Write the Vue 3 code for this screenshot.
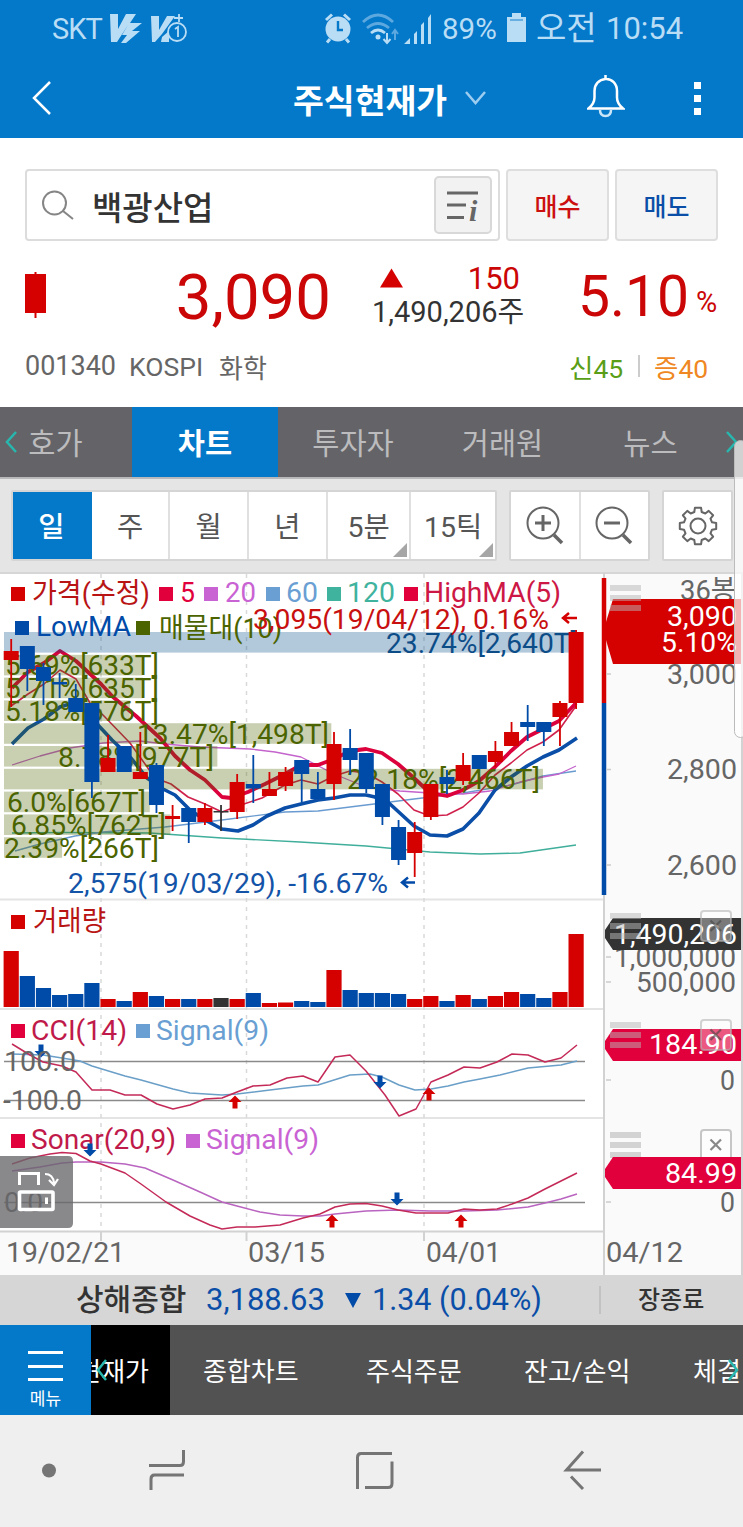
<template>
  <div class="app">
    <header class="head">
      <div class="status">
        <span class="carrier">SKT</span>
        <svg class="apps" width="78" height="32" viewBox="0 0 78 32" fill="#b9ddf5">
          <path d="M0 2h8v15L16 2h10l-6 9h12L22 19h8L16 31h-5l6-8h-5l6-10L7 30H1z" />
          <path d="M41 4h8v14l8-14h8L52 22l-7 8h-3z" />
          <path d="M52 25l7-6v11h-8z" />
          <circle cx="67" cy="20" r="9" fill="#0478c9" stroke="#b9ddf5" stroke-width="1.8" />
          <path d="M65 17l3-2v10M64 6h9M69 2v8" fill="none" stroke="#b9ddf5" stroke-width="1.8" />
        </svg>
        <svg class="signals" width="110" height="34" viewBox="0 0 110 34" fill="none" stroke="#b9ddf5">
          <circle cx="14" cy="18" r="12.500" fill="#b9ddf5" stroke="none" />
          <path d="M2 9l6-5.500M26 9l-6-5.500M6 28l-3 3.500M22 28l3 3.500" stroke-width="3" />
          <path d="M14 10v9h5" stroke="#0478c9" stroke-width="2.4" />
          <path d="M39 11q15-14 30 0M43 17q11-9 22 0" stroke="#5da9df" stroke-width="2.8" />
          <path d="M47 22q7-6 14 0" stroke-width="2.8" />
          <circle cx="54" cy="26" r="2.5" fill="#b9ddf5" stroke="none" />
          <path d="M63 22v9m-3.500-3l3.500 4 3.500-4" stroke-width="2" />
          <path d="M71 29v-9m-3 3l3-4 3 4" stroke="#5da9df" stroke-width="2" />
          <path d="M80 33l6-6v6zM90 33v-10l3-3v13zM97 33V14l3-3v22zM104 33V7l3-4v30z" fill="#b9ddf5" stroke="none" />
        </svg>
        <span class="battery_text">89%</span>
        <svg class="battery" width="19" height="29" viewBox="0 0 19 29">
          <path d="M0 4h5V0h9v4h5v25H0z" fill="#b9ddf5" />
          <path d="M3 7h13" stroke="#4c9fd9" stroke-width="1.500" />
        </svg>
        <span class="ampm">오전</span>
        <span class="clock">10:54</span>
      </div>
      <div class="title_row">
        <svg class="back" width="20" height="34" viewBox="0 0 20 34"><path d="M18 1L2 17l16 16" /></svg>
        <h1>주식현재가</h1>
        <svg class="down" width="21" height="14" viewBox="0 0 21 14"><path d="M1 1l9.500 11L20 1" /></svg>
        <svg class="bell" width="38" height="44" viewBox="0 0 38 44">
          <path d="M1.500 34.500q6-5 6-11V17C7.500 10 12 5.500 18.500 5S30 10 30 17v6.500q0 6 6 11zM18.500 1v4" />
          <path d="M13 36q0 6 5.500 6t5.500-6" stroke="#c9e5f8" />
        </svg>
        <div class="dots"><i></i><i></i><i></i></div>
      </div>
    </header>

    <section class="quote">
      <div class="search_row">
        <div class="search">
          <svg width="34" height="32" viewBox="0 0 34 32" fill="none" stroke="#858585" stroke-width="2">
            <circle cx="12.500" cy="14" r="11.500" />
            <path d="M21 22l10 8" />
          </svg>
          <span class="stock">백광산업</span>
          <div class="list_btn">
            <svg width="34" height="34" viewBox="0 0 34 34" stroke="#666" stroke-width="3" fill="none">
              <path d="M2 5h31M2 17h19M2 29.500h17" />
            </svg>
            <em>i</em>
          </div>
        </div>
        <button class="trade buy">매수</button>
        <button class="trade sell">매도</button>
      </div>
      <div class="price_row">
        <svg class="candle" width="21" height="46" viewBox="0 0 21 46" fill="#d50000">
          <path d="M0 2h21v39H0zM9.500 0h2v46h-2z" />
        </svg>
        <strong class="price">3,090</strong>
        <div class="change">
          <div class="diff">
            <svg width="23" height="20" viewBox="0 0 24 20"><path d="M12 0l12 20H0z" fill="#d50000" /></svg>
            <span>150</span>
          </div>
          <div class="volume">1,490,206주</div>
        </div>
        <strong class="rate">5.10</strong>
        <span class="pct">%</span>
      </div>
      <div class="info_row">
        <span class="code">001340</span>
        <span class="market">KOSPI</span>
        <span class="sector">화학</span>
        <span class="credit">신45</span>
        <i></i>
        <span class="margin">증40</span>
      </div>
    </section>

    <nav class="tabs">
      <svg class="arrow" width="12" height="22" viewBox="0 0 12 22"><path d="M11 1L2 11l9 10" /></svg>
      <div
        v-for="tab in tabs"
        :key="tab.name"
        class="tab"
        :class="[tab.cls, { active: tab.name === current_tab }]"
        @click="current_tab = tab.name"
      >
        {{ tab.name }}
      </div>
      <svg class="arrow next" width="12" height="22" viewBox="0 0 12 22"><path d="M1 1l9 10-9 10" /></svg>
    </nav>

    <div class="tools">
      <div class="periods">
        <div
          v-for="p in periods"
          :key="p"
          class="period"
          :class="{ active: p === period, more: p.length > 1 }"
          @click="period = p"
        >
          {{ p }}
        </div>
      </div>
      <div class="zoom">
        <div class="tool">
          <svg width="40" height="42" viewBox="0 0 40 42">
            <circle cx="18" cy="18" r="15.500" />
            <path d="M29 30l8 8" stroke-width="3.500" />
            <path d="M10 18h16M18 10v16" stroke-width="3" />
          </svg>
        </div>
        <div class="tool">
          <svg width="40" height="42" viewBox="0 0 40 42">
            <circle cx="18" cy="18" r="15.500" />
            <path d="M29 30l8 8" stroke-width="3.500" />
            <path d="M10 18h16" stroke-width="3" />
          </svg>
        </div>
      </div>
      <div class="tool gear">
        <svg width="40" height="40" viewBox="0 0 40 40">
          <path :d="gear" stroke-linejoin="round" />
          <circle cx="20" cy="20" r="7.500" />
        </svg>
      </div>
    </div>

    <svg class="chart" width="743" height="703" viewBox="0 572 743 703">
      <rect x="0" y="572" width="743" height="703" fill="#fff" />
      <rect x="0" y="1231" width="743" height="44" fill="#fafafa" />
      <rect x="604" y="572" width="139" height="703" fill="#fafafa" />
      <path d="M0 573h743" stroke="#d6d6d6" stroke-width="2" />
      <path d="M0 899.500h604M0 1009h604M0 1118h604" stroke="#e4e4e4" stroke-width="2" />
      <path d="M0 1231.500h604M604 573v702M742 573v702M101 1232v9M246.500 1232v9M424 1232v9" stroke="#d2d2d2" stroke-width="2" fill="none" />
      <path d="M101 574v657M246.500 574v657M424 574v657" stroke="#d9d9d9" stroke-width="1.500" stroke-dasharray="4 5" />

      <!-- 이동평균선 -->
      <polyline
        v-for="line in price_lines"
        :key="line.color + line.w"
        :points="line.points"
        fill="none"
        :stroke="line.color"
        :stroke-width="line.w"
        stroke-linejoin="round"
      />

      <!-- 매물대 -->
      <g v-for="(b, i) in profile" :key="b.text">
        <rect
          x="4"
          :y="632 + i * 22.8"
          :width="b.pct * 24.3"
          height="20.6"
          :fill="i ? '#4b6400' : '#004a88'"
          opacity="0.3"
        />
        <text
          :x="b.x"
          :y="652.5 + i * 22.8"
          :textLength="b.w"
          lengthAdjust="spacingAndGlyphs"
          :fill="i ? '#4b6400' : '#0c4d88'"
        >{{ b.text }}</text>
      </g>

      <!-- 캔들 -->
      <g v-for="(c, i) in candles" :key="i" :fill="colors[c[0]]">
        <rect :x="cx(i) - 0.9" :y="c[1]" width="1.8" :height="c[4] - c[1]" />
        <rect :x="cx(i) - 7.5" :y="c[2]" width="15" :height="c[3] - c[2]" />
        <rect :x="cx(i) - 7.6" :y="c[5]" width="15.2" :height="1007 - c[5]" />
      </g>

      <g v-for="l in legends" :key="l.text + l.y">
        <rect v-if="l.x" :x="l.x" :y="l.y - 14" width="14" height="14" :fill="l.color" />
        <text
          :x="l.tx"
          :y="l.y + (l.dy || 1)"
          :textLength="l.w"
          lengthAdjust="spacingAndGlyphs"
          :fill="l.ink || l.color"
        >{{ l.text }}</text>
      </g>
      <path d="M577 618h-14m6-5l-6 5 6 5" stroke="#d50000" stroke-width="2.500" fill="none" />
      <path d="M415 882.500h-13m6-5l-6 5 6 5" stroke="#004aa8" stroke-width="2.500" fill="none" />

      <!-- CCI / Sonar -->
      <path d="M4 1061.500h581M4 1100.500h581M4 1202.500h581" stroke="#8a8a8a" stroke-width="1.500" />
      <polyline
        v-for="line in sub_lines"
        :key="line.points"
        :points="line.points"
        fill="none"
        :stroke="line.color"
        stroke-width="1.5"
        stroke-linejoin="round"
      />
      <path
        v-for="m in marks"
        :key="m.join()"
        d="M0-6.500l6.500 6.500H2.500V6.500H-2.500V0H-6.500z"
        :fill="m[2] ? '#d50000' : '#004aa8'"
        :transform="`translate(${m[0]} ${m[1]}) rotate(${m[2] ? 0 : 180})`"
      />

      <!-- 우측 축 -->
      <path d="M604 578v125" stroke="#d50000" stroke-width="4.500" />
      <path d="M604 703v192" stroke="#004aa8" stroke-width="4.500" />
      <path d="M606 674h5M606 769.500h5M606 865h5M606 957h5M606 982h5M606 1080h5M606 1202h5" stroke="#ccc" stroke-width="1.500" />
      <text
        v-for="t in axis"
        :key="t[0] + t[2]"
        :x="t[1]"
        :y="t[2]"
        :textLength="t[3]"
        lengthAdjust="spacingAndGlyphs"
        fill="#666"
      >{{ t[0] }}</text>
      <g fill="#d3d3d3">
        <rect x="610" y="1132" width="31" height="6" />
        <rect x="610" y="1142" width="31" height="6" />
        <rect x="610" y="1152" width="31" height="6" />
      </g>
      <path d="M613 599h128v65H613l-7-24v-18z" fill="#d50000" />
      <path d="M613 918h128v32H613l-8-12v-8z" fill="#333" />
      <path d="M613 1029h128v32H613l-8-12v-8z" fill="#e1003c" />
      <path d="M613 1157h128v32H613l-8-12v-8z" fill="#e1003c" />
      <text
        v-for="t in flags"
        :key="t[0]"
        :x="t[1]"
        :y="t[2]"
        :textLength="t[3]"
        lengthAdjust="spacingAndGlyphs"
        fill="#fff"
      >{{ t[0] }}</text>
      <g v-for="y in [585, 913, 1022]" :key="y" fill="#b8b8b8" opacity="0.5">
        <rect x="610" :y="y" width="31" height="6" />
        <rect x="610" :y="y + 10" width="31" height="6" />
        <rect x="610" :y="y + 20" width="31" height="6" />
      </g>
      <g v-for="(y, i) in [911, 1020, 1130]" :key="y">
        <path v-if="i == 2" d="M701 1157v-24q0-3 3-3h24q3 0 3 3v24" fill="#fff" fill-opacity="0.500" stroke="#c6c6c6" stroke-width="2" />
        <rect v-else x="701" :y="y" width="30" height="30" rx="3" fill="#fff" fill-opacity="0.35" stroke="#b5b5b5" stroke-opacity="0.6" stroke-width="2" />
        <path :d="`M710.500 ${y + 9.5}l10.500 10.500m0-10.500l-10.500 10.500`" fill="none" :stroke="i == 2 ? '#888' : '#444'" stroke-width="2.200" :opacity="i == 2 ? 1 : 0.6" />
      </g>

      <!-- 가로보기 버튼 -->
      <path d="M0 1156h68q5 0 5 5v62q0 5-5 5H0z" fill="#68686c" fill-opacity="0.78" />
      <g fill="none" stroke="#fff" stroke-width="3">
        <path d="M19.500 1185v-11.500h19V1185" />
        <rect x="19.500" y="1192" width="33.500" height="17.500" rx="1" stroke-width="3.600" />
        <path d="M46.500 1197.500v6.500" />
        <path d="M45 1174q8 0 9 9m-5-3l5 5 4-6" stroke-width="2.200" />
      </g>
    </svg>

    <div class="ticker">
      <b class="index_name">상해종합</b>
      <span class="index_value">3,188.63</span>
      <svg width="16" height="15" viewBox="0 0 16 15"><path d="M0 0h16L8 15z" fill="#004aa8" /></svg>
      <span class="index_diff">1.34 (0.04%)</span>
      <b class="closed">장종료</b>
    </div>

    <div class="bottom">
      <div class="menu">
        <i></i><i></i><i></i>
        <span>메뉴</span>
      </div>
      <div class="current">
        <span>현재가</span>
        <svg class="arrow" width="12" height="24" viewBox="0 0 12 24"><path d="M10 2L2 12l8 10" /></svg>
      </div>
      <div v-for="(b, i) in bottom_tabs" :key="b" class="link" :class="'link' + i">{{ b }}</div>
      <svg class="arrow end" width="12" height="24" viewBox="0 0 12 24"><path d="M2 2l8 10-8 10" /></svg>
    </div>

    <div class="sys_nav">
      <svg width="743" height="112" viewBox="0 0 743 112" fill="none" stroke="#757575" stroke-width="3">
        <circle cx="49" cy="55.500" r="7" fill="#757575" stroke="none" />
        <path d="M149 50.500h31q3.500 0 3.500-4V35M184 60h-29.500q-3.500 0-3.500 4v11" />
        <path d="M392 38.500h-31q-3.500 0-3.500 4V74M365 72.500h23q4 0 4-4V46.500" />
        <path d="M601 55h-34.500l16.500-18.500M571 61.500L583 74" />
      </svg>
    </div>

    <div class="edge_handle"></div>
  </div>
</template>

<script setup>
import { ref } from "vue";

const tabs = [
  { name: "호가", cls: "t0" },
  { name: "차트", cls: "t1" },
  { name: "투자자", cls: "t2" },
  { name: "거래원", cls: "t3" },
  { name: "뉴스", cls: "t4" },
];
const current_tab = ref("차트");
const periods = ["일", "주", "월", "년", "5분", "15틱"];
const period = ref("일");
const bottom_tabs = ["종합차트", "주식주문", "잔고/손익", "체결"];

const colors = { r: "#d50000", b: "#004aa8", k: "#333" };
// 색, 고가, 몸통 위, 몸통 아래, 저가, 거래량
const candles = [
  ["r", 639, 651, 660, 707, 951],
  ["b", 646, 646, 669, 691, 976],
  ["b", 663, 667, 681, 705, 988],
  ["b", 673, 682, 684.5, 698, 995],
  ["b", 684, 698, 712, 712, 994],
  ["b", 703, 703, 782, 798, 983],
  ["r", 735, 758, 772, 772, 999],
  ["b", 746, 746, 772, 772, 1001],
  ["r", 732, 772, 779, 779, 992],
  ["b", 763, 765, 805, 813, 996],
  ["r", 805, 816, 819, 831, 999],
  ["b", 808, 808, 822, 843, 999],
  ["r", 803, 808, 822, 825, 999],
  ["k", 805, 811, 812.5, 831, 998],
  ["r", 774, 782, 812, 819, 999],
  ["b", 755, 784, 788.5, 803, 993],
  ["r", 772, 789, 796, 796, 1003],
  ["r", 767, 772, 786, 791, 1002.5],
  ["b", 760, 760, 774, 802, 1001],
  ["b", 772, 789, 799, 799, 1002],
  ["r", 732, 744, 784, 800, 970],
  ["b", 729, 748, 760, 775, 990],
  ["b", 753, 753, 789, 793, 993],
  ["b", 784, 784, 817, 825, 993],
  ["b", 820, 827, 860, 865, 994],
  ["r", 822, 832, 853, 877, 999],
  ["r", 784, 784, 817, 820, 996],
  ["b", 770, 777, 784, 794, 1001],
  ["r", 753, 765, 781, 785, 995],
  ["b", 755, 755, 769, 769, 999],
  ["r", 741, 751, 762, 767, 996],
  ["r", 722, 732, 746, 746, 992],
  ["b", 705, 722, 727, 741, 994],
  ["b", 722, 722, 732, 746, 998],
  ["r", 701, 703, 717, 746, 992],
  ["r", 630, 632, 703, 709, 934],
];
const cx = (i) => 11.2 + i * 16.14;

const price_lines = [
  {
    color: "#3fae9a",
    w: 1.3,
    points:
      "12,833 60,832.5 150,833 222,838 300,842 366,846 430,852 480,854 520,853 576,845",
  },
  {
    color: "#6a9bd0",
    w: 1.3,
    points:
      "15,851 40,844 75,836 103,832 165,827 222,820 285,812 318,811 366,805 414,799 463,793 511,785 543,776 576,771",
  },
  {
    color: "#c463cc",
    w: 1.3,
    points:
      "12,765 40,756 70,748 103,743 140,741 165,744 200,747 250,749 275,752 301,757 334,774 366,787 400,791 430,793 463,794 490,791 520,782 543,777 559,774 576,766",
  },
  {
    color: "#d0204c",
    w: 1.6,
    points:
      "11,706 28,694 44,684 60,670 76,679 90,703 103,715 130,743 155,778 171,784 188,797 205,804 222,812 238,806 262,798 285,785 301,780 318,784 334,776 350,771 366,773 382,782 398,794 414,810 430,816 447,815 463,807 479,793 495,775 511,763 527,750 543,742 559,730 576,706",
  },
  {
    color: "#0a4ea8",
    w: 3.6,
    points:
      "12,744 28,728 44,719 60,707 76,702 98,725 112,740 131,758 147,778 163,789 175,795 190,810 205,820 222,829 238,831 253,825 267,816 285,808 301,804 318,800 334,798 350,795 366,795 375,797 390,804 414,826 430,835 447,836 463,829 479,813 495,790 511,777 527,766 543,757 559,750 577,738",
  },
  {
    color: "#dc003c",
    w: 3.8,
    points:
      "12,688 28,672 44,663 60,651 76,661 101,684 113,697 136,716 160,738 175,756 190,770 205,780 222,797 231,798 248,792 265,784 285,774 301,765 318,765 334,759 350,751 366,749 382,753 398,764 414,778 430,793 447,796 463,790 479,781 495,767 511,751 527,737 543,729 559,721 576,703",
  },
];

const profile = [
  { pct: 23.74, text: "23.74%[2,640T]", x: 386, w: 192 },
  { pct: 5.69, text: "5.69%[633T]", x: 5, w: 154 },
  { pct: 5.71, text: "5.71%[635T]", x: 5, w: 154 },
  { pct: 5.18, text: "5.18%[576T]", x: 5, w: 154 },
  { pct: 13.47, text: "13.47%[1,498T]", x: 137, w: 192 },
  { pct: 8.78, text: "8.78%[977T]", x: 58, w: 156 },
  { pct: 22.18, text: "22.18%[2,466T]", x: 347, w: 193 },
  { pct: 6.0, text: "6.0%[667T]", x: 7, w: 139 },
  { pct: 6.85, text: "6.85%[762T]", x: 11, w: 155 },
  { pct: 2.39, text: "2.39%[266T]", x: 4, w: 155 },
];

const legends = [
  { text: "가격(수정)", x: 11, y: 601, tx: 32, w: 118, color: "#d50000", ink: "#b81414", dy: 2 },
  { text: "5", x: 159, y: 601, tx: 180, w: 15, color: "#e1003c" },
  { text: "20", x: 204, y: 601, tx: 225, w: 31, color: "#c963d3" },
  { text: "60", x: 266, y: 601, tx: 286, w: 32, color: "#6a9fd3" },
  { text: "120", x: 327, y: 601, tx: 347, w: 48, color: "#3fb39e" },
  { text: "HighMA(5)", x: 404, y: 601, tx: 424, w: 137, color: "#e1003c", ink: "#cd1745" },
  { text: "LowMA", x: 15, y: 635, tx: 36, w: 95, color: "#004aa8" },
  { text: "매물대(10)", x: 136, y: 635, tx: 159, w: 123, color: "#4b6400", dy: 2.5 },
  { text: "3,095(19/04/12), 0.16%", y: 627, tx: 253, w: 296, color: "#c81010", dy: 1.5 },
  { text: "2,575(19/03/29), -16.67%", y: 891, tx: 68, w: 320, color: "#1354a8", dy: 1.5 },
  { text: "거래량", x: 11, y: 929, tx: 33, w: 73, color: "#d50000", ink: "#b81414", dy: 1.5 },
  { text: "CCI(14)", x: 11, y: 1038, tx: 31, w: 96, color: "#e1003c", ink: "#c01a4a", dy: 1.5 },
  { text: "Signal(9)", x: 136, y: 1038, tx: 156, w: 113, color: "#6a9fd3", dy: 1.5 },
  { text: "Sonar(20,9)", x: 11, y: 1148, tx: 31, w: 145, color: "#e1003c", ink: "#c01a4a" },
  { text: "Signal(9)", x: 186, y: 1148, tx: 206, w: 113, color: "#c963d3" },
];

const sub_lines = [
  {
    color: "#6a9fc8",
    points:
      "12,1054 43,1055 62,1058 80,1061 92,1066 125,1076 141,1080 173,1089 190,1093 222,1095 237,1094 270,1090 303,1086 318,1085 350,1075 370,1074 382,1077 399,1085 415,1090 431,1089 448,1086 464,1082 480,1079 500,1075 528,1068 561,1065 577,1061",
  },
  {
    color: "#c42a58",
    points:
      "12,1044 30,1055 43,1062 62,1066 76,1072 92,1090 110,1090 125,1095 141,1095 157,1104 173,1109 190,1105 205,1099 222,1098 237,1092 253,1086 270,1085 287,1078 303,1076 318,1082 335,1057 350,1055 366,1071 385,1095 399,1116 416,1109 431,1082 448,1075 464,1067 480,1068 497,1062 512,1054 528,1055 545,1062 561,1058 577,1045",
  },
  {
    color: "#b964c0",
    points:
      "12,1171 40,1167 62,1163 76,1162 101,1162 125,1164 145,1168 173,1180 200,1192 222,1202 237,1206 260,1212 280,1215 303,1216 320,1216 335,1214 366,1211 398,1210 430,1211 464,1211 497,1210 528,1207 545,1203 561,1199 577,1194",
  },
  {
    color: "#c42a58",
    points:
      "12,1164 30,1158 50,1154 62,1152.5 76,1153.5 90,1161 101,1164 125,1173 141,1184 166,1202 190,1216 210,1225 222,1229 237,1227 255,1227 280,1225 303,1218 320,1214 335,1207 350,1204 366,1203.5 382,1206 398,1210 416,1213 448,1213 464,1209 480,1210 497,1209 512,1204 528,1198 545,1189 561,1181 577,1173",
  },
];

// x, y, 매수 신호 여부
const marks = [
  [41, 1051, 0],
  [380, 1082, 0],
  [235, 1102, 1],
  [429, 1094, 1],
  [90, 1150, 0],
  [397, 1199, 0],
  [332, 1221, 1],
  [461, 1221, 1],
];

// 글자, x, y, 폭
const axis = [
  ["36봉", 680, 600, 56],
  ["3,000", 667, 684, 70],
  ["2,800", 667, 779, 70],
  ["2,600", 667, 875, 70],
  ["1,000,000", 614, 967, 122],
  ["500,000", 636, 992, 100],
  ["0", 720, 1090, 15],
  ["0", 720, 1212, 15],
  ["100.0", 4, 1071, 72],
  ["-100.0", 3, 1110, 79],
  ["0.0", 4, 1212, 39],
  ["19/02/21", 6, 1261.5, 119],
  ["03/15", 248, 1261.5, 77],
  ["04/01", 426, 1261.5, 75],
  ["04/12", 606, 1261.5, 77],
];
const flags = [
  ["3,090", 667, 625.5, 70],
  ["5.10%", 661, 652, 76],
  ["1,490,206", 614, 944, 123],
  ["184.90", 649, 1054, 88],
  ["84.99", 665, 1182.5, 72],
];

// 톱니 8개짜리 설정 아이콘
const gear = gear_path(20, 20, 18.5, 14.5, 8);
function gear_path(x, y, outer, inner, teeth) {
  const points = [];
  for (let i = 0; i < teeth; i++) {
    const base = (i * 2 * Math.PI) / teeth - Math.PI / 2;
    [
      [-0.26, inner],
      [-0.17, outer],
      [0.17, outer],
      [0.26, inner],
    ].forEach(([a, r]) => {
      points.push(
        (x + r * Math.cos(base + a)).toFixed(1) + " " + (y + r * Math.sin(base + a)).toFixed(1)
      );
    });
  }
  return "M" + points.join("L") + "Z";
}
</script>

<style>
body {
  margin: 0;
}
</style>
<style scoped>
.app {
  position: relative;
  width: 743px;
  height: 1527px;
  overflow: hidden;
  background: #fff;
  font-family: Roboto, "Noto Sans CJK KR", sans-serif;
  white-space: nowrap;
}
svg {
  display: block;
  flex: none;
}
.head {
  height: 138px;
  background: #0478c9;
}
.status {
  display: flex;
  align-items: center;
  height: 58px;
  padding-left: 52px;
  color: #b9ddf5;
  font-size: 30px;
  line-height: 60px;
}
.carrier {
  width: 58px;
  font-size: 29px;
  letter-spacing: -1px;
}
.apps {
  margin-top: -2px;
}
.signals {
  margin-left: 136px;
  margin-top: -3px;
}
.battery_text {
  width: 65px;
  margin-left: 8px;
  font-size: 29.500px;
}
.battery {
  margin-top: -3px;
}
.ampm {
  width: 70px;
  margin-left: 10px;
  font-size: 33px;
  line-height: 62px;
}
.clock {
  font-size: 31px;
}
.title_row {
  display: flex;
  align-items: center;
  height: 80px;
  padding-left: 32px;
}
.title_row svg {
  fill: none;
  stroke: #fff;
  stroke-width: 2.5;
}
.title_row h1 {
  width: 160px;
  margin: 0 0 0 241px;
  color: #fff;
  font-size: 33.500px;
  font-weight: 700;
}
.title_row .down {
  margin-left: 12px;
  stroke: #9ccdf0;
}
.title_row .bell {
  margin-left: 101px;
  margin-top: -5px;
}
.dots {
  display: flex;
  flex-direction: column;
  gap: 6px;
  margin-left: 69px;
}
.dots i {
  width: 7px;
  height: 7px;
  background: #fff;
}
.quote {
  height: 269px;
  padding: 31px 25px 0;
  box-sizing: border-box;
}
.search_row {
  display: flex;
  gap: 6px;
  height: 72px;
}
.search {
  display: flex;
  align-items: center;
  width: 475px;
  padding: 0 6px 0 15px;
  border: 2px solid #dcdcdc;
  border-radius: 4px;
  box-sizing: border-box;
}
.stock {
  flex: 1;
  margin-left: 16px;
  padding-top: 2px;
  color: #333;
  font-size: 33px;
  font-weight: 500;
}
.list_btn {
  display: flex;
  align-items: center;
  width: 58px;
  height: 58px;
  padding-left: 9px;
  border: 2px solid #d8d8d8;
  border-radius: 5px;
  background: #f2f2f2;
  box-sizing: border-box;
}
.list_btn em {
  margin: 12px 0 0 -10px;
  color: #666;
  font: italic bold 30px "Liberation Serif", serif;
}
.trade {
  width: 103px;
  padding: 0;
  border: 2px solid #dedede;
  border-radius: 4px;
  background: #f5f5f5;
  font: 500 25px Roboto, "Noto Sans CJK KR", sans-serif;
}
.buy {
  color: #cc0f0f;
}
.sell {
  color: #0a4ea8;
}
.price_row {
  display: flex;
  height: 90px;
  padding-top: 14px;
  color: #cb0606;
}
.candle {
  margin-top: 17px;
}
.price {
  width: 285px;
  margin-top: 6px;
  font-size: 63.500px;
  font-weight: 400;
  line-height: 74px;
  text-align: right;
}
.change {
  width: 152px;
  margin-left: 41px;
}
.diff {
  display: flex;
  align-items: center;
  justify-content: space-between;
  padding: 0 4px 0 8px;
  height: 36px;
  margin-top: 5px;
  font-size: 31px;
}
.volume {
  height: 32px;
  margin-top: 0;
  color: #333;
  font-size: 29px;
  line-height: 32px;
}
.rate {
  width: 118px;
  margin-left: 54px;
  margin-top: 6px;
  font-size: 57px;
  font-weight: 400;
  line-height: 72px;
}
.pct {
  margin-top: 30px;
  font-size: 29px;
}
.info_row {
  display: flex;
  align-items: center;
  height: 42px;
  color: #666;
  font-size: 27px;
}
.code {
  width: 104px;
}
.market {
  width: 90px;
  font-size: 26.500px;
}
.sector {
  width: 350px;
  font-size: 26px;
}
.credit {
  width: 69px;
  color: #5a9e18;
  font-size: 26.500px;
}
.info_row i {
  width: 2px;
  height: 22px;
  background: #ccc;
}
.margin {
  margin-left: 14px;
  color: #ef8722;
  font-size: 26.500px;
}
.tabs {
  display: flex;
  align-items: center;
  height: 72px;
  padding-left: 5px;
  background: #646468;
  border-bottom: 2px solid #b9b9bb;
  box-sizing: border-box;
}
.arrow {
  fill: none;
  stroke: #27b7ae;
  stroke-width: 2.5;
}
.next {
  margin-left: 2px;
}
.tab {
  height: 70px;
  color: #bcbcbe;
  font-size: 29.500px;
  line-height: 75px;
  text-align: center;
}
.t0 {
  width: 115px;
  text-indent: -38px;
}
.t1 {
  width: 146px;
}
.t2 {
  width: 150px;
}
.t3 {
  width: 149px;
}
.t4 {
  width: 147px;
}
.tab.active {
  background: #0478c9;
  color: #fff;
  font-weight: 700;
}
.tools {
  display: flex;
  gap: 12px;
  height: 93px;
  padding: 11px 0 0 11px;
  background: #e5e5e5;
  box-sizing: border-box;
}
.periods,
.zoom,
.gear {
  display: flex;
  height: 71px;
  border: 2px solid #d5d5d5;
  border-radius: 2px;
  background: #fff;
  box-sizing: border-box;
}
.periods {
  width: 486px;
}
.period {
  position: relative;
  width: 79px;
  border-right: 2px solid #e0e0e0;
  box-sizing: border-box;
  color: #555;
  font-size: 28.500px;
  line-height: 71px;
  text-align: center;
}
.period.more {
  width: 84px;
}
.period:last-child {
  border-right: 0;
}
.period.more::after {
  content: "";
  position: absolute;
  right: 2px;
  bottom: 2px;
  border-left: 14px solid transparent;
  border-bottom: 14px solid #a6a6a6;
}
.period.active {
  border-right-color: #0478c9;
  background: #0478c9;
  color: #fff;
  font-weight: 500;
}
.zoom {
  width: 141px;
}
.tool {
  display: flex;
  align-items: center;
  justify-content: center;
  width: 50%;
  fill: none;
  stroke: #666;
  stroke-width: 2;
}
.tool + .tool {
  border-left: 2px solid #e0e0e0;
}
.tools .gear {
  width: 71px;
}
.chart text {
  font-size: 28px;
}
.ticker {
  display: flex;
  align-items: center;
  height: 50px;
  padding-left: 76px;
  background: #d6d6d6;
  color: #0a4ea8;
  line-height: 52px;
}
.ticker b {
  color: #333;
  font-weight: 500;
}
.index_name {
  width: 130px;
  font-size: 30px;
}
.index_value {
  width: 139px;
  font-size: 31px;
}
.index_diff {
  width: 227px;
  margin-left: 11px;
  font-size: 30.500px;
}
.ticker .closed {
  padding-left: 37px;
  border-left: 2px solid #c2c2c2;
  font-size: 24px;
  line-height: 28px;
}
.bottom {
  position: relative;
  display: flex;
  height: 90px;
  background: #525252;
  color: #fff;
  font-size: 26px;
  line-height: 94px;
}
.menu {
  display: flex;
  flex-direction: column;
  align-items: center;
  width: 91px;
  padding-top: 26px;
  background: #0478c9;
  box-sizing: border-box;
  font-size: 17px;
  line-height: 20px;
}
.menu i {
  width: 35px;
  height: 3px;
  margin-bottom: 10.500px;
  background: #fff;
}
.menu span {
  margin-top: -3px;
}
.current {
  position: relative;
  display: flex;
  justify-content: flex-end;
  width: 79px;
  padding-right: 21px;
  overflow: hidden;
  background: #000;
  box-sizing: border-box;
}
.current .arrow {
  position: absolute;
  left: 5px;
  top: 33px;
}
.link0 {
  width: 163px;
  margin-left: 33px;
}
.link1 {
  width: 158px;
}
.link2 {
  width: 169px;
}
.end {
  position: absolute;
  right: 4px;
  top: 33px;
}
.sys_nav {
  height: 112px;
  background: #efefef;
}
/* 화면 오른쪽 엣지 패널 손잡이 */
.edge_handle {
  position: absolute;
  right: -4px;
  top: 440px;
  width: 13px;
  height: 298px;
  border: 1.500px solid #bbb;
  border-radius: 8px;
  background: rgba(255, 255, 255, 0.7);
  box-sizing: border-box;
}
</style>
